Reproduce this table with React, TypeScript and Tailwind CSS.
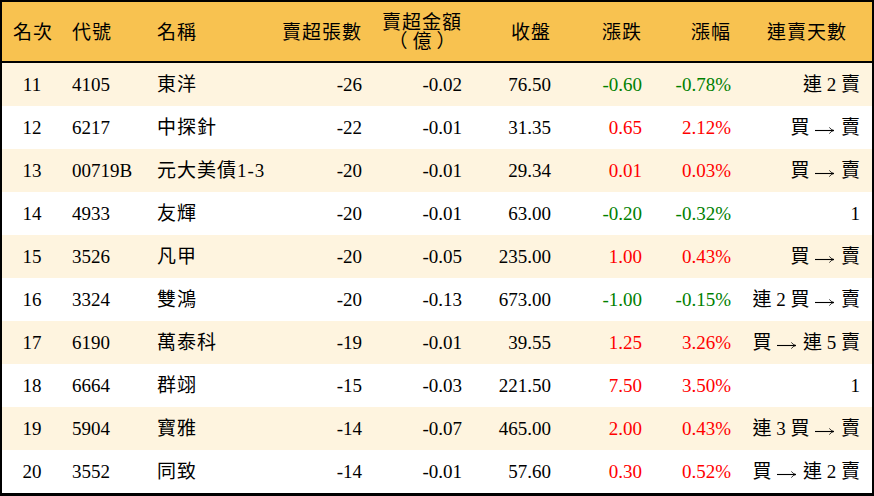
import React from 'react';

type Row = {
  rank: number;
  code: string;
  name: string;
  lots: string;
  amount: string;
  close: string;
  change: string;
  pct: string;
  streak: string;
};

const rows: Row[] = [
  { rank: 11, code: '4105', name: '東洋', lots: '-26', amount: '-0.02', close: '76.50', change: '-0.60', pct: '-0.78%', streak: '連 2 賣' },
  { rank: 12, code: '6217', name: '中探針', lots: '-22', amount: '-0.01', close: '31.35', change: '0.65', pct: '2.12%', streak: '買 → 賣' },
  { rank: 13, code: '00719B', name: '元大美債1-3', lots: '-20', amount: '-0.01', close: '29.34', change: '0.01', pct: '0.03%', streak: '買 → 賣' },
  { rank: 14, code: '4933', name: '友輝', lots: '-20', amount: '-0.01', close: '63.00', change: '-0.20', pct: '-0.32%', streak: '1' },
  { rank: 15, code: '3526', name: '凡甲', lots: '-20', amount: '-0.05', close: '235.00', change: '1.00', pct: '0.43%', streak: '買 → 賣' },
  { rank: 16, code: '3324', name: '雙鴻', lots: '-20', amount: '-0.13', close: '673.00', change: '-1.00', pct: '-0.15%', streak: '連 2 買 → 賣' },
  { rank: 17, code: '6190', name: '萬泰科', lots: '-19', amount: '-0.01', close: '39.55', change: '1.25', pct: '3.26%', streak: '買 → 連 5 賣' },
  { rank: 18, code: '6664', name: '群翊', lots: '-15', amount: '-0.03', close: '221.50', change: '7.50', pct: '3.50%', streak: '1' },
  { rank: 19, code: '5904', name: '寶雅', lots: '-14', amount: '-0.07', close: '465.00', change: '2.00', pct: '0.43%', streak: '連 3 買 → 賣' },
  { rank: 20, code: '3552', name: '同致', lots: '-14', amount: '-0.01', close: '57.60', change: '0.30', pct: '0.52%', streak: '買 → 連 2 賣' },
];

const cols = 'grid grid-cols-[60px_88px_100px_120px_100px_89px_91px_89px_133px]';

const Arrow = () => (
  <svg width="20" height="10" viewBox="0 0 20 10" className="inline-block align-middle mx-px" aria-hidden>
    <path d="M0 5.5H18.5" stroke="black" strokeWidth="1.1" />
    <path d="M14.5 2.5C15.8 4.2 17 5 19 5.5C17 6 15.8 6.8 14.5 8.5" stroke="black" strokeWidth="1" fill="none" />
  </svg>
);

function Streak({ text }: { text: string }) {
  const parts = text.split('→');
  return (
    <>
      {parts.map((p, i) => (
        <React.Fragment key={i}>
          {i > 0 && <Arrow />}
          {p}
        </React.Fragment>
      ))}
    </>
  );
}

export default function App() {
  return (
    <div
      className="w-[874px] h-[496px] box-border border-2 border-b-[3px] border-black bg-white text-black text-[19px] overflow-hidden"
      style={{ fontFamily: '"Liberation Serif", "Noto Sans CJK TC", serif' }}
    >
      {/* header */}
      <div className={`${cols} h-[61px] pt-[4px] items-center bg-[#f8c250] border-b-2 border-black tracking-[1px]`}>
        <div className="pl-[11px]">名次</div>
        <div className="pl-[10px]">代號</div>
        <div className="pl-[7px]">名稱</div>
        <div className="text-right pr-[8px]">賣超張數</div>
        <div className="flex justify-end pr-[8px] -mt-[3px]">
          <div className="text-center leading-[19px]">
            <div>賣超金額</div>
            <div className="tracking-[5px] pl-[5px]">（億）</div>
          </div>
        </div>
        <div className="text-right pr-[8px]">收盤</div>
        <div className="text-right pr-[8px]">漲跌</div>
        <div className="text-right pr-[8px]">漲幅</div>
        <div className="text-right pr-[25px]">連賣天數</div>
      </div>

      {rows.map((r, i) => {
        const up = !r.change.startsWith('-');
        const tone = up ? 'text-[#ff0000]' : 'text-[#008000]';
        return (
          <div key={r.rank} className={`${cols} h-[43px] pt-[2px] items-center ${i % 2 === 0 ? 'bg-[#fef4df]' : 'bg-white'}`}>
            <div className="text-center">{r.rank}</div>
            <div className="pl-[10px]">{r.code}</div>
            <div className="pl-[7px] tracking-[1px] whitespace-nowrap">{r.name}</div>
            <div className="text-right pr-[8px]">{r.lots}</div>
            <div className="text-right pr-[8px]">{r.amount}</div>
            <div className="text-right pr-[8px]">{r.close}</div>
            <div className={`text-right pr-[8px] ${tone}`}>{r.change}</div>
            <div className={`text-right pr-[8px] ${tone}`}>{r.pct}</div>
            <div className="text-right pr-[12px] whitespace-pre">
              <Streak text={r.streak} />
            </div>
          </div>
        );
      })}
    </div>
  );
}
